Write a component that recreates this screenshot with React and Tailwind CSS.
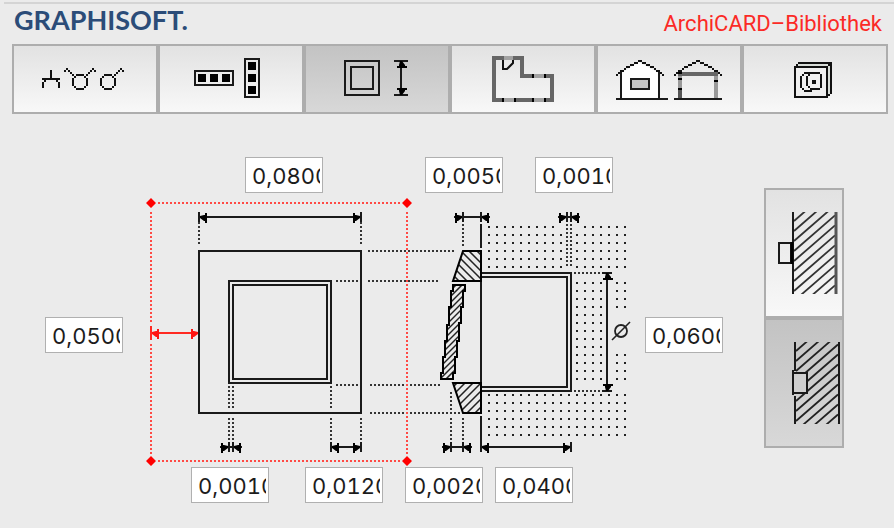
import React, { useState } from "react";

const INK = "#1a1a1a";

const TREAD = {
  right: (x, y) => `M${x} ${y - 1}v2l-4 3h-1v2h-2v-10h2v2h1z`,
  left: (x, y) => `M${x} ${y - 1}v2l4 3h1v2h2v-10h-2v2h-1z`,
  up: (x, y) => `M${x - 1} ${y}h2l3 4v1h2v2h-10v-2h2v-1z`,
  down: (x, y) => `M${x - 1} ${y}h2l3 -4v-1h2v-2h-10v2h2v1z`,
};

function Head({ x, y, dir, fill = "#000" }) {
  return <path d={TREAD[dir](x, y)} fill={fill} />;
}

function Dots({ d, color = "#333" }) {
  return <path d={d} stroke={color} strokeWidth="2" strokeDasharray="2 2" fill="none" />;
}

/* Draws a bitmap of two-unit cells: every "#" is one filled cell. */
function Cells({ x, y, rows }) {
  const d = rows
    .flatMap((row, r) => [...row].map((c, i) => (c === "#" ? `M${x + i * 2} ${y + r * 2}h2v2h-2z` : "")))
    .join("");
  return <path d={d} fill="#111" stroke="none" />;
}

function Hatch({ id, x1, x2, top, bottom, color }) {
  const lines = [];
  for (let y = top + 9; y < bottom + 40; y += 10) {
    lines.push(`M${x1} ${y}L${x2} ${y - (x2 - x1) * 0.87}`);
  }
  return (
    <>
      <clipPath id={id}>
        <rect x={x1} y={top} width={x2 - x1} height={bottom - top} />
      </clipPath>
      <path d={lines.join("")} stroke={color} strokeWidth="1.8" clipPath={`url(#${id})`} />
    </>
  );
}

const TREE = [
  "....#....",
  "....#....",
  "....#....",
  "....#....",
  "#########",
  ".#.....#.",
  "#.......#",
  "#.......#",
  "#.......#",
];

const LAMP = [
  ".#............#.",
  "#.#..........#.#",
  "...#........#...",
  "....#.####.#....",
  ".....#....#.....",
  "....#......#....",
  "....#......#....",
  "....#......#....",
  "....#......#....",
  ".....#....#.....",
  "......####......",
];

const SWITCH = [
  "..........#.",
  ".........#.#",
  "........#...",
  "..####.#....",
  ".#....#.....",
  "#......#....",
  "#......#....",
  "#......#....",
  "#......#....",
  ".#....#.....",
  "..####......",
];

const ROOF = [
  "...........##...........",
  ".........##..##.........",
  ".......##......##.......",
  ".....##..........##.....",
  "....#..............#....",
  "..##................##..",
  ".#....................#.",
  "#......................#",
];

const SOCKET = [
  "..#################",
  ".#...............##",
  "#################.#",
  "#...............#.#",
  "#...............#.#",
  "#....########...#.#",
  "#...#..#.....#..#.#",
  "#..#..#......#..#.#",
  "#..#..#......#..#.#",
  "#..#..#..##..#..#.#",
  "#..#..#..##..#..#.#",
  "#..#..#......#..#.#",
  "#..#...#.....#..#.#",
  "#...#...#####...#.#",
  "#....####.......#.#",
  "#...............#.#",
  "#...............##.",
  "#################..",
];

/* Toolbar icons */
function SymbolsIcon() {
  return (
    <svg viewBox="14 46 142 66" className="h-[66px] w-full">
      <Cells x={42} y={70} rows={TREE} />
      <Cells x={64} y={68} rows={LAMP} />
      <Cells x={100} y={68} rows={SWITCH} />
    </svg>
  );
}

function FramesIcon() {
  return (
    <svg viewBox="160 46 142 66" className="h-[66px] w-full">
      <g fill="none" stroke={INK} strokeWidth="2">
        <rect x="195" y="71" width="38" height="14" />
        <rect x="245" y="59" width="14" height="38" />
      </g>
      <path d="M198 74h8v8h-8zM210 74h8v8h-8zM222 74h8v8h-8zM248 62h8v8h-8zM248 74h8v8h-8zM248 86h8v8h-8z" fill="#000" />
    </svg>
  );
}

function SizeIcon() {
  return (
    <svg viewBox="306 46 142 66" className="h-[66px] w-full">
      <g fill="none" stroke={INK} strokeWidth="2">
        <rect x="345" y="61" width="34" height="34" />
        <rect x="351" y="67" width="22" height="22" />
        <path d="M394 61H408M394 95H408M401 61V95" />
      </g>
      <Head x={401} y={61} dir="up" />
      <Head x={401} y={95} dir="down" />
    </svg>
  );
}

function PlanIcon() {
  return (
    <svg viewBox="452 46 142 66" className="h-[66px] w-full" fill="none">
      <path d="M494 58H522V76H552V100H494Z" stroke="#666" strokeWidth="4" />
      <path d="M504 58H513M504 100H514M534 100H544M534 76H544" stroke="#a2a2a2" strokeWidth="4" />
      <path d="M502 100h2M514 100h2M532 100h2M544 100h2M532 76h2M544 76h2" stroke="#000" strokeWidth="4" />
      <path d="M503 60V69H507L513 63V60" stroke="#111" strokeWidth="2" />
    </svg>
  );
}

function HousesIcon() {
  return (
    <svg viewBox="598 46 142 66" className="h-[66px] w-full" fill="none" stroke={INK} strokeWidth="2">
      <path d="M621 98V73L639 62L659 73V98Z" fill="#fff" stroke="none" />
      <path d="M621 72V98M659 72V98M616 99H668" />
      <Cells x={616} y={60} rows={ROOF} />
      <rect x="631" y="79" width="18" height="10" fill="#c4c4c4" />
      <path d="M678 74H718" stroke="#666" strokeWidth="4" />
      <path d="M680 76V98" stroke="#999" strokeWidth="4" />
      <path d="M680 90V98" stroke="#555" strokeWidth="4" />
      <path d="M716 76V98" stroke="#999" strokeWidth="4" />
      <path d="M680 78v2M680 88v2M716 80v2M680 72v2" stroke="#000" strokeWidth="4" />
      <path d="M674 99H722" />
      <Cells x={674} y={60} rows={ROOF} />
    </svg>
  );
}

function BoxIcon() {
  return (
    <svg viewBox="744 46 142 66" className="h-[66px] w-full">
      <path d="M795 67L799 63H831V93L827 97Z" fill="#d8ddd8" />
      <rect x="795" y="67" width="32" height="30" fill="#efefef" />
      <Cells x={794} y={62} rows={SOCKET} />
    </svg>
  );
}

/* Mounting variants */
function SurfaceIcon() {
  return (
    <svg viewBox="766 190 76 126" className="h-[126px] w-full" fill="none" stroke={INK} strokeWidth="2">
      <Hatch id="surface" x1={794} x2={835} top={212} bottom={294} color="#333" />
      <path d="M793 212V294" />
      <path d="M836 212V294" stroke="#555" strokeWidth="3" />
      <rect x="779" y="243" width="12" height="20" />
      <path d="M792 242V264" stroke="#000" strokeWidth="3" />
    </svg>
  );
}

function FlushIcon() {
  return (
    <svg viewBox="766 320 76 126" className="h-[126px] w-full" fill="none" stroke={INK} strokeWidth="2">
      <Hatch id="flush" x1={796} x2={838} top={342} bottom={424} color="#222" />
      <path d="M795 342V371M795 396V424M839 342V424" />
      <rect x="793" y="373" width="14" height="20" fill="#d0d0d0" />
      <path d="M793 370V395" />
    </svg>
  );
}

const TABS = [
  { label: "Symbole", Icon: SymbolsIcon },
  { label: "Rahmen", Icon: FramesIcon },
  { label: "Abmessungen", Icon: SizeIcon },
  { label: "Grundriss", Icon: PlanIcon },
  { label: "Ansicht", Icon: HousesIcon },
  { label: "3D", Icon: BoxIcon },
];

const VARIANTS = [
  { label: "Aufputz", Icon: SurfaceIcon },
  { label: "Unterputz", Icon: FlushIcon },
];

const FIELDS = [
  { label: "Rahmenbreite", value: "0,0800", place: "left-[245px] top-[43px]" },
  { label: "Rahmentiefe", value: "0,0050", place: "left-[425px] top-[43px]" },
  { label: "Wandstärke", value: "0,0010", place: "left-[535px] top-[43px]" },
  { label: "Abstand", value: "0,0500", place: "left-[45px] top-[203px]" },
  { label: "Durchmesser", value: "0,0600", place: "left-[645px] top-[203px]" },
  { label: "Fuge", value: "0,0010", place: "left-[191px] top-[353px]" },
  { label: "Rand", value: "0,0120", place: "left-[305px] top-[353px]" },
  { label: "Überstand", value: "0,0020", place: "left-[405px] top-[353px]" },
  { label: "Dosentiefe", value: "0,0400", place: "left-[495px] top-[353px]" },
];

function wallDots() {
  const pts = [];
  const row = (y, from, to) => {
    for (let x = from; x <= to; x += 8) pts.push(`M${x - 1} ${y}h2`);
  };
  for (let y = 227; y <= 267; y += 8) {
    row(y, 489, y === 227 ? 553 : 561);
    row(y, y === 227 ? 585 : 577, 625);
  }
  for (let y = 283; y <= 379; y += 8) {
    row(y, 577, 601);
    if (y <= 307 || y >= 355) row(y, 617, 625);
  }
  for (let y = 395; y <= 435; y += 8) row(y, 489, 625);
  return pts.join("");
}

function diagonals(x1, x2, y1, y2, step) {
  const h = Math.abs(x2 - x1);
  const out = [];
  for (let y = y1 - 40; y < y2 + 40; y += step) out.push(`M${x1} ${y}L${x2} ${y + h}`);
  return out.join("");
}

function Drawing() {
  return (
    <svg viewBox="0 114 730 414" className="h-full w-full" fill="none" aria-hidden="true">
      <path d={wallDots()} stroke="#222" strokeWidth="2" />

      <Dots d="M199 222V246M361 222V246M368 251H454M336 281H358M368 281H438M336 385H358M370 385H440M370 413H462" />
      <Dots d="M229 386V408M233 386V408M331 386V408M229 418V440M233 418V440M331 418V440M361 418V440" />
      <Dots d="M463 224V246M567 224V266M571 224V266M574 273H602M574 391H602M451 392V410M451 418V440M463 418V440" />

      <g stroke={INK} strokeWidth="2">
        <rect x="199" y="251" width="162" height="162" />
        <rect x="229" y="281" width="102" height="102" />
        <rect x="233" y="285" width="94" height="94" />
        <path d="M199 217H361M199 212V222M361 212V222" />
        <path d="M331 447H361M331 442V452M361 442V452M229 442V452M233 442V452M220 447H242" />
        <path d="M454 217H490M463 212V222M481 212V222M481 224V248" />
        <path d="M558 217H580M567 212V222M571 212V222" />
        <path d="M481 250V414M481 273H571V391H481M481 277H567V387H481" />
        <path d="M481 416V452M481 447H571M571 442V452M442 447H472M451 442V452M463 442V452" />
        <path d="M607 273V391M602 273H612M602 391H612" />
      </g>
      <Head x={200} y={217} dir="left" />
      <Head x={360} y={217} dir="right" />
      <Head x={332} y={447} dir="left" />
      <Head x={360} y={447} dir="right" />
      <Head x={228} y={447} dir="right" />
      <Head x={234} y={447} dir="left" />
      <Head x={462} y={217} dir="right" />
      <Head x={482} y={217} dir="left" />
      <Head x={566} y={217} dir="right" />
      <Head x={572} y={217} dir="left" />
      <Head x={450} y={447} dir="right" />
      <Head x={464} y={447} dir="left" />
      <Head x={482} y={447} dir="left" />
      <Head x={570} y={447} dir="right" />
      <Head x={607} y={273} dir="up" />
      <Head x={607} y={391} dir="down" />

      <clipPath id="upper"><path d="M463 251H481V281H453Z" /></clipPath>
      <clipPath id="lower"><path d="M453 383H481V413H463Z" /></clipPath>
      <clipPath id="blade"><path d="M453 285H465L453 379H441Z" /></clipPath>
      <g stroke="#222" strokeWidth="1.5">
        <path d={diagonals(453, 481, 251, 281, 8)} clipPath="url(#upper)" />
        <path d={diagonals(481, 453, 383, 413, 8)} clipPath="url(#lower)" />
        <path d={diagonals(466, 440, 285, 379, 6)} clipPath="url(#blade)" />
      </g>
      <g stroke="#000" strokeWidth="2">
        <path d="M463 251H481V281H453Z" />
        <path d="M453 383H481V413H463Z" />
        <path d="M453 285H465V291H463V307H461V323H459V341H457V357H455V373H453V379H441V373H443V357H445V341H447V325H449V307H451V291H453Z" />
      </g>

      <circle cx="621" cy="331" r="6" stroke="#222" strokeWidth="1.8" />
      <path d="M612 340L630 322" stroke="#222" strokeWidth="1.6" />

      <Dots d="M158 203H400M158 461H400M151 212V322M151 344V454M407 212V454" color="#ff4a44" />
      <path d="M151 326V340M152 333H198" stroke="#ff2a22" strokeWidth="2" />
      <Head x={152} y={333} dir="left" fill="#ff1410" />
      <Head x={198} y={333} dir="right" fill="#ff1410" />
      <path
        d="M151 198l5 5l-5 5l-5 -5zM407 198l5 5l-5 5l-5 -5zM151 456l5 5l-5 5l-5 -5zM407 456l5 5l-5 5l-5 -5z"
        fill="#ff0000"
      />
    </svg>
  );
}

const IDLE = "border-2 border-[#adadad] bg-linear-to-b from-[#e2e2e2] to-[#f8f8f8]";
const ACTIVE = "border-2 border-[#adadad] bg-linear-to-b from-[#c3c3c3] to-[#d8d8d8]";

export default function App() {
  const [tab, setTab] = useState(2);
  const [variant, setVariant] = useState(1);

  return (
    <div className="min-h-screen overflow-hidden bg-[#ebebeb] pt-0.5 font-['Inter',sans-serif]">
      <hr className="ml-1 border-t-2 border-[#d4d4d4]" />
      <header className="flex h-10 items-start justify-between pr-3 pl-3.5">
        <div className="font-['Lato',sans-serif] text-[27px] leading-8 font-bold text-[#2b4c78]">GRAPHISOFT.</div>
        <div className="font-['Roboto',sans-serif] text-[22px] leading-10 text-[#fb2a26]">ArchiCARD–Bibliothek</div>
      </header>

      <nav className="mr-1.5 ml-3 grid grid-cols-6">
        {TABS.map(({ label, Icon }, i) => (
          <button
            key={label}
            type="button"
            aria-label={label}
            aria-pressed={i === tab}
            onClick={() => setTab(i)}
            className={i === tab ? ACTIVE : IDLE}
          >
            <Icon />
          </button>
        ))}
      </nav>

      <main className="flex items-start gap-[34px]">
        <div className="relative h-[414px] w-[730px] shrink-0">
          <Drawing />
          {FIELDS.map(({ label, value, place }) => (
            <input
              key={place}
              type="text"
              aria-label={label}
              defaultValue={value}
              className={`absolute h-9 w-[78px] border border-[#b0b0b0] bg-white pt-0.5 pr-0.5 pl-1.5 text-[22px] text-[#1c1c1c] tabular-nums outline-none ${place}`}
            />
          ))}
        </div>

        <div className="mt-[74px] flex w-20 shrink-0 flex-col">
          {VARIANTS.map(({ label, Icon }, i) => (
            <button
              key={label}
              type="button"
              aria-label={label}
              aria-pressed={i === variant}
              onClick={() => setVariant(i)}
              className={i === variant ? ACTIVE : IDLE}
            >
              <Icon />
            </button>
          ))}
        </div>
      </main>
    </div>
  );
}
